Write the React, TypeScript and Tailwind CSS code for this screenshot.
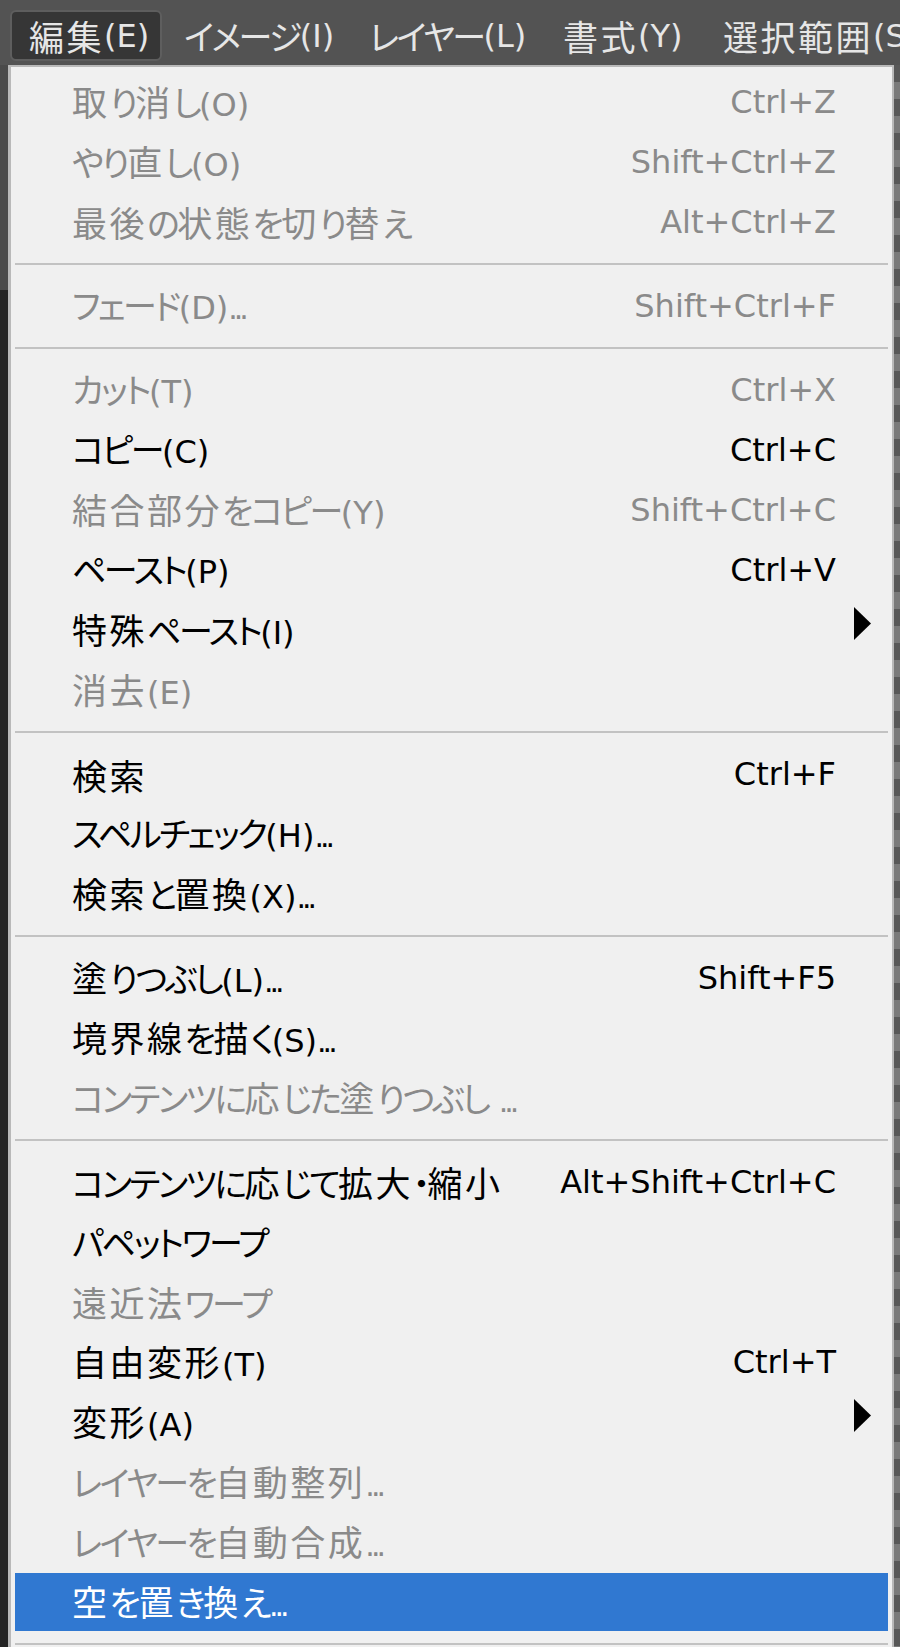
type Item = {
  label: string;
  shortcut?: string;
  disabled?: boolean;
  submenu?: boolean;
  active?: boolean;
};

const groups: Item[][] = [
  [
    { label: "取り消し(O)", shortcut: "Ctrl+Z", disabled: true },
    { label: "やり直し(O)", shortcut: "Shift+Ctrl+Z", disabled: true },
    { label: "最後の状態を切り替え", shortcut: "Alt+Ctrl+Z", disabled: true },
  ],
  [{ label: "フェード(D)...", shortcut: "Shift+Ctrl+F", disabled: true }],
  [
    { label: "カット(T)", shortcut: "Ctrl+X", disabled: true },
    { label: "コピー(C)", shortcut: "Ctrl+C" },
    { label: "結合部分をコピー(Y)", shortcut: "Shift+Ctrl+C", disabled: true },
    { label: "ペースト(P)", shortcut: "Ctrl+V" },
    { label: "特殊ペースト(I)", submenu: true },
    { label: "消去(E)", disabled: true },
  ],
  [
    { label: "検索", shortcut: "Ctrl+F" },
    { label: "スペルチェック(H)..." },
    { label: "検索と置換(X)..." },
  ],
  [
    { label: "塗りつぶし(L)...", shortcut: "Shift+F5" },
    { label: "境界線を描く(S)..." },
    { label: "コンテンツに応じた塗りつぶし ...", disabled: true },
  ],
  [
    { label: "コンテンツに応じて拡大・縮小", shortcut: "Alt+Shift+Ctrl+C" },
    { label: "パペットワープ" },
    { label: "遠近法ワープ", disabled: true },
    { label: "自由変形(T)", shortcut: "Ctrl+T" },
    { label: "変形(A)", submenu: true },
    { label: "レイヤーを自動整列...", disabled: true },
    { label: "レイヤーを自動合成...", disabled: true },
    { label: "空を置き換え...", active: true },
  ],
];

const KANJI = /^[\u4e00-\u9fff]/;
const KANA = /^[\u3000-\u30ff\uff00-\uffef]/;

// split a label into kanji / kana / dots / latin runs, each with its own font metrics
function Mixed({ text }: { text: string }) {
  const runs =
    text.match(/[\u4e00-\u9fff]+|[\u3000-\u30ff\uff00-\uffef]+|\.+|[^\u3000-\u30ff\u4e00-\u9fff\uff00-\uffef.]+/g) ?? [];
  return (
    <>
      {runs.map((run, i) => {
        if (KANJI.test(run))
          return (
            <span key={i} className="font-['Noto_Sans_CJK_JP',sans-serif] text-[35px] tracking-[2.5px]">
              {run}
            </span>
          );
        if (KANA.test(run))
          return (
            <span
              key={i}
              className="font-['Noto_Sans_CJK_JP',sans-serif] text-[34px] tracking-[-2.5px] [font-feature-settings:'palt']"
            >
              {run}
            </span>
          );
        if (run.startsWith("."))
          return (
            <span key={i} className="font-['DejaVu_Sans',sans-serif] text-[30px] tracking-[-4px]">
              {run}
            </span>
          );
        return (
          <span key={i} className="font-['DejaVu_Sans','Noto_Sans_CJK_JP',sans-serif] text-[32px]">
            {run}
          </span>
        );
      })}
    </>
  );
}

function Separator() {
  return (
    <div className="h-[24px] flex items-center mx-[4px]">
      <div className="h-[2px] w-full bg-[#c2c2c2]" />
    </div>
  );
}

function MenuRow({ item }: { item: Item }) {
  const color = item.active
    ? "bg-[#3078d1] text-white"
    : item.disabled
      ? "text-[#8a8a8a]"
      : "text-black";

  return (
    <div className="h-[60px] py-[1px] mx-[4px]">
      <div className={`h-full flex items-center pl-[57px] pr-[52px] leading-none ${color}`}>
        <span className="whitespace-pre">
          <Mixed text={item.label} />
        </span>
        <span className="ml-auto font-['DejaVu_Sans',sans-serif] text-[32px] whitespace-pre">
          {item.shortcut}
        </span>
        {item.submenu && (
          <svg width="17" height="33" viewBox="0 0 17 33" className="ml-auto -mr-[35px] -mt-[14px]">
            <polygon points="0,0 17,16.5 0,33" fill="#000" />
          </svg>
        )}
      </div>
    </div>
  );
}

export default function App() {
  const bar = [
    { label: "編集(E)", w: "w-[152px]", open: true },
    { label: "イメージ(I)", w: "w-[180px]" },
    { label: "レイヤー(L)", w: "w-[189px]" },
    { label: "書式(Y)", w: "w-[155px]" },
    { label: "選択範囲(S)", w: "w-[220px]" },
  ];

  return (
    <div className="w-[900px] h-[1647px] overflow-hidden bg-[#262626] flex flex-col">
      {/* Menu bar */}
      <div className="h-[65px] shrink-0 bg-[#535353] flex items-center gap-[5px] pl-[10px] pt-[6px] whitespace-nowrap">
        {bar.map((b) => (
          <div
            key={b.label}
            className={`${b.w} shrink-0 h-[51px] flex items-center pl-[17px] text-[#e6e6e6] leading-none ${
              b.open ? "bg-[#363636] border-[2px] border-[#5e5e5e] rounded-[6px]" : ""
            }`}
          >
            <Mixed text={b.label} />
          </div>
        ))}
      </div>

      <div className="flex flex-1">
        {/* left panel edge */}
        <div className="w-[8px] shrink-0 flex flex-col">
          <div className="h-[225px] bg-[#4a4a4a]" />
          <div className="flex-1 bg-[#242424]" />
        </div>

        {/* Dropdown menu */}
        <div className="flex-1 bg-[#f0f0f0] border-l-[3px] border-t-[2px] border-r-[2px] border-[#b9b9b9] pt-[5px]">
          {groups.map((group, gi) => (
            <div key={gi}>
              {group.map((item) => (
                <MenuRow key={item.label} item={item} />
              ))}
              <Separator />
            </div>
          ))}
        </div>

        {/* right panel edge */}
        <div className="w-[6px] shrink-0 bg-[repeating-linear-gradient(180deg,#585858_0px,#585858_17px,#7a7a7a_17px,#7a7a7a_34px)]" />
      </div>
    </div>
  );
}
